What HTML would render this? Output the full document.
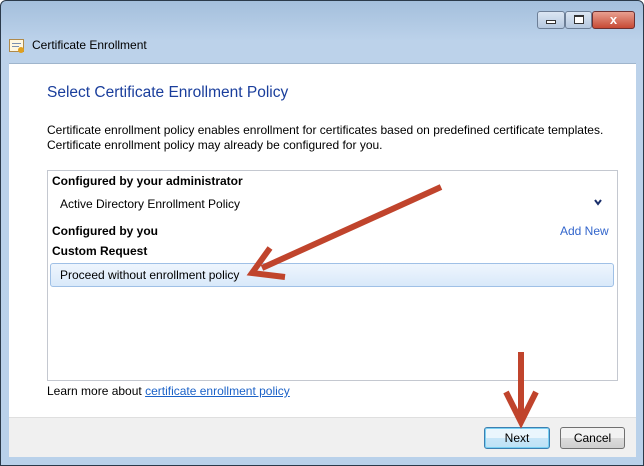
<!DOCTYPE html>
<html><head><style>
*{margin:0;padding:0;box-sizing:border-box}
body{width:644px;height:466px;overflow:hidden;font-family:"Liberation Sans",sans-serif;font-size:12px;position:relative;background:#fff}
.frame{position:absolute;left:0;top:0;width:644px;height:466px;border:1px solid #2b3a4a;border-radius:6px 6px 0 0;background:linear-gradient(#a4bfdc,#bcd2ea 40px,#b9d1ea);}
.abs{position:absolute}
.white{left:9px;top:63px;width:627px;height:355px;background:#fff;border-top:1px solid #9fb5cc}
.footer{left:9px;top:417px;width:627px;height:40px;background:#f0f0f0;border-top:1px solid #dfdfdf}
.btn{height:22px;border:1px solid #707070;border-radius:3px;background:linear-gradient(#f2f2f2 50%,#dcdcdc 50%,#cfcfcf);text-align:center;line-height:20px;font-size:12px}
</style></head><body>
<div class="frame"></div>
<div class="abs" style="left:537px;top:11px;width:28px;height:18px;border:1px solid #6d7f97;border-radius:3px;background:linear-gradient(#dbe6f3,#b5c8df)"><div class="abs" style="left:8px;top:8px;width:10px;height:4px;border:1px solid #333;background:#fff"></div></div>
<div class="abs" style="left:565px;top:11px;width:27px;height:18px;border:1px solid #6d7f97;border-radius:3px;background:linear-gradient(#dbe6f3,#b5c8df)"><div class="abs" style="left:8px;top:3px;width:10px;height:9px;border:1px solid #333;border-top-width:2px;background:#fff"></div></div>
<div class="abs" style="left:592px;top:11px;width:43px;height:18px;border:1px solid #6d3030;border-radius:3px;background:linear-gradient(#e8a090,#c74a35);color:#fff;font-weight:bold;text-align:center;line-height:16px;font-size:13px">x</div>
<div class="abs" style="left:9px;top:39px;width:15px;height:13px;border:1px solid #b08a4a;background:#fff7e0"><div class="abs" style="left:2px;top:3px;width:9px;height:1px;background:#7a8fb0"></div><div class="abs" style="left:2px;top:6px;width:7px;height:1px;background:#7a8fb0"></div><div class="abs" style="left:8px;top:7px;width:6px;height:6px;border-radius:50%;background:#e0a020"></div></div>
<div class="abs" style="left:32px;top:38px;font-size:12px;color:#000">Certificate Enrollment</div>
<div class="abs white"></div>
<div class="abs" style="left:47px;top:84px;font-size:15.5px;color:#1a3e9c">Select Certificate Enrollment Policy</div>
<div class="abs" style="left:47px;top:123px;line-height:15px;color:#000;font-size:12px">Certificate enrollment policy enables enrollment for certificates based on predefined certificate templates.<br>Certificate enrollment policy may already be configured for you.</div>
<div class="abs" style="left:47px;top:170px;width:571px;height:211px;border:1px solid #c4c8d0"></div>
<div class="abs" style="left:52px;top:174px;font-weight:bold">Configured by your administrator</div>
<div class="abs" style="left:60px;top:197px">Active Directory Enrollment Policy</div>
<div class="abs" style="left:560px;top:224px;color:#3366cc">Add New</div>
<div class="abs" style="left:52px;top:224px;font-weight:bold">Configured by you</div>
<div class="abs" style="left:52px;top:244px;font-weight:bold">Custom Request</div>
<div class="abs" style="left:50px;top:263px;width:564px;height:24px;border:1px solid #9fc0e6;border-radius:3px;background:linear-gradient(#eef5fd,#d9e9fa)"></div>
<div class="abs" style="left:60px;top:268px">Proceed without enrollment policy</div>
<div class="abs" style="left:47px;top:384px">Learn more about <span style="color:#1b62c8;text-decoration:underline">certificate enrollment policy</span></div>
<div class="abs footer"></div>
<div class="abs btn" style="left:484px;top:427px;width:66px;border-color:#3c7fb1;background:linear-gradient(#eaf6fd 50%,#c8e6f8 50%,#bee2f6);box-shadow:0 0 0 1px #7ad0f2 inset">Next</div>
<div class="abs btn" style="left:560px;top:427px;width:65px">Cancel</div>
<svg class="abs" style="left:0;top:0" width="644" height="466">
<polyline points="595,200 598,204 601,200" stroke="#1a2f6b" stroke-width="2" fill="none"/>
<g stroke="#c0442c" stroke-width="6" fill="none" stroke-linecap="butt">
<line x1="441" y1="187" x2="262" y2="268"/>
<polyline points="270,248 252,273 285,277" stroke-linejoin="miter"/>
<line x1="521" y1="352" x2="521" y2="420"/>
<polyline points="506,392 521,422 536,392"/>
</g>
</svg>
</body></html>
